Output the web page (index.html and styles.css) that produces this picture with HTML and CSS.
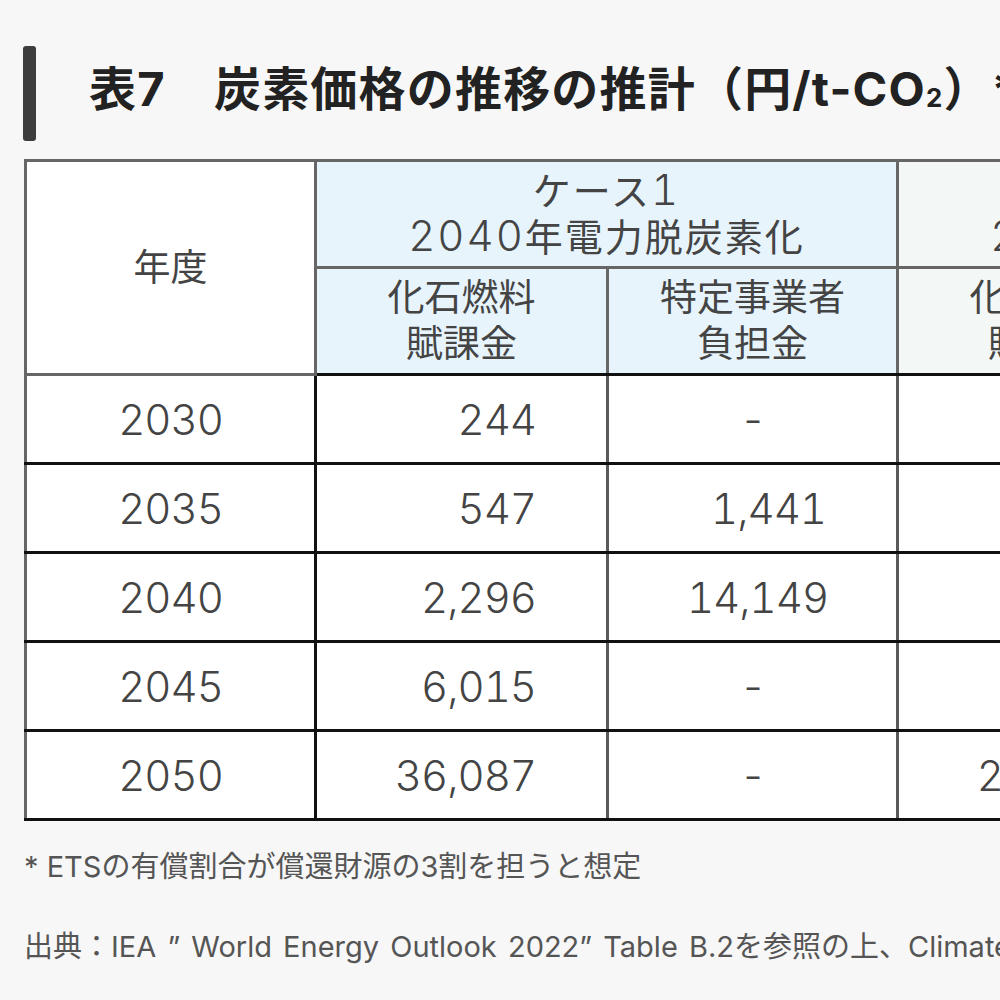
FILE: index.html
```html
<!DOCTYPE html>
<html lang="ja">
<head>
<meta charset="utf-8">
<title>表7 炭素価格の推移の推計</title>
<link rel="stylesheet" href="styles.css">
</head>
<body>
<div class="page">
  <h2 class="title"><span class="bar"></span><span class="title-text">表7　炭素価格の推移の推計（円/t-CO<span class="sub">2</span>）*</span></h2>
  <table class="price-table">
    <colgroup>
      <col class="c-year"><col class="c-a"><col class="c-b"><col class="c-a"><col class="c-b">
    </colgroup>
    <thead>
      <tr class="h1">
        <th rowspan="2" class="year-head">年度</th>
        <th colspan="2" class="case1 case-head">ケース<span class="d">1</span><br><span class="d">2040</span>年電力脱炭素化</th>
        <th colspan="2" class="case2 case-head">ケース<span class="d">2</span><br><span class="d">2050</span>年電力脱炭素化</th>
      </tr>
      <tr class="h2">
        <th class="case1">化石燃料<br>賦課金</th>
        <th class="case1">特定事業者<br>負担金</th>
        <th class="case2">化石燃料<br>賦課金</th>
        <th class="case2">特定事業者<br>負担金</th>
      </tr>
    </thead>
    <tbody>
      <tr><td class="yr">2030</td><td class="num">244</td><td class="mid">-</td><td class="num">244</td><td class="mid">-</td></tr>
      <tr><td class="yr">2035</td><td class="num">547</td><td class="mid shift">1,441</td><td class="num">547</td><td class="mid">-</td></tr>
      <tr><td class="yr">2040</td><td class="num">2,296</td><td class="mid shift-s">14,149</td><td class="num">2,296</td><td class="mid">-</td></tr>
      <tr><td class="yr">2045</td><td class="num">6,015</td><td class="mid">-</td><td class="num">6,015</td><td class="mid">-</td></tr>
      <tr><td class="yr">2050</td><td class="num">36,087</td><td class="mid">-</td><td class="num">21,572</td><td class="mid">-</td></tr>
    </tbody>
  </table>
  <p class="note">* ETSの有償割合が償還財源の3割を担うと想定</p>
  <p class="source">出典：IEA ” World Energy Outlook 2022” Table B.2を参照の上、Climate Integrate作成</p>
</div>
</body>
</html>
```

FILE: styles.css
```css
html, body {
  margin: 0;
  padding: 0;
  overflow: hidden;
  background: #f7f7f7;
}

body {
  font-family: "Inter", "Noto Sans CJK JP", sans-serif;
  color: #444;
}

.page {
  width: 1500px;
  padding: 46px 0 0 24px;
}

.title {
  display: flex;
  align-items: center;
  margin: 0 0 18px -1px;
  height: 95px;
  font-size: 47px;
  font-weight: 700;
  letter-spacing: 1.2px;
  color: #222;
  white-space: nowrap;
  line-height: 1;
}

.title-text {
  padding-bottom: 10px;
}

.bar {
  width: 13px;
  height: 95px;
  background: #3d3d3d;
  border-radius: 3px;
  margin-right: 53px;
  flex: none;
}

.sub {
  font-size: 0.55em;
  vertical-align: -0.05em;
}

.price-table {
  border-collapse: collapse;
  table-layout: fixed;
  width: 1454px;
  background: #fff;
  font-variant-numeric: tabular-nums;
}

.price-table col.c-year {
  width: 290px;
}

.price-table col.c-a {
  width: 292px;
}

.price-table col.c-b {
  width: 290px;
}

.price-table th {
  font-weight: 400;
  font-size: 37px;
  line-height: 46px;
  color: #444;
  border: 3px solid #666;
  padding: 0;
  text-align: center;
}

.price-table th.case-head {
  font-size: 38px;
  letter-spacing: 2px;
}

.price-table th .d {
  font-size: 42px;
  font-weight: 300;
  line-height: 40px;
}

.h1 th {
  height: 104px;
}

.h2 th {
  height: 104px;
  border-bottom: 3px solid #111;
}

.year-head {
  background: #fff;
  border-bottom: 3px solid #111;
}

.case1 {
  background: #e7f4fc;
}

.case2 {
  background: #f3f7f6;
}

.price-table td {
  font-size: 42px;
  font-weight: 300;
  letter-spacing: -1px;
  height: 86px;
  padding: 0;
  color: #444;
  border-top: 3px solid #111;
  border-bottom: 3px solid #111;
  border-left: 3px solid #5a5a5a;
  border-right: 3px solid #5a5a5a;
}

.price-table td.yr {
  text-align: center;
  border-left: 3px solid #666;
  border-right: 3px solid #111;
}

.price-table td.num {
  text-align: right;
  padding-right: 70px;
}

.price-table td.mid {
  text-align: center;
}

.price-table td.shift {
  padding-left: 32px;
}

.price-table td.shift-s {
  padding-left: 10px;
}

.note,
.source {
  margin: 0;
  font-size: 29px;
  color: #555;
  white-space: nowrap;
  line-height: 36px;
}

.note {
  margin-top: 28px;
}

.source {
  margin-top: 44px;
  word-spacing: 3px;
}
```
